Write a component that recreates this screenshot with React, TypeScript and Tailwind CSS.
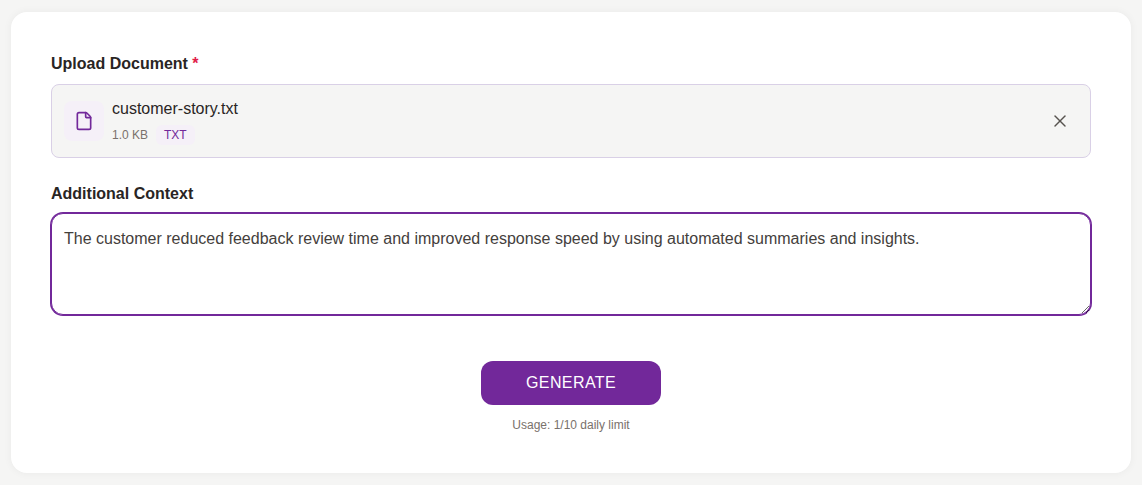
import { File, X } from "lucide-react";

export default function App() {
  return (
    <div className="min-h-[485px] bg-[#f5f5f4] px-[11px] pt-[12px] pb-[12px] font-['Liberation_Sans',Arial,sans-serif]">
      <div className="h-[461px] rounded-2xl bg-white px-10 pt-[41px] shadow-[0_0_8px_rgba(0,0,0,0.05)]">
        <label className="block h-[22px] text-base leading-[22px] font-bold text-[#292524]">
          Upload Document <span className="text-[#e11d48]">*</span>
        </label>

        <div className="mt-[9px] flex h-[74px] items-center justify-between rounded-lg border border-[#d9d0e6] bg-[#f5f5f4] pr-[20px] pl-3">
          <div className="flex items-center gap-2">
            <div className="flex h-10 w-10 items-center justify-center rounded-lg bg-[#f5f0f8]">
              <File size={20} strokeWidth={2} className="text-[#72289a]" />
            </div>
            <div>
              <div className="text-base leading-[22px] text-[#292524]">customer-story.txt</div>
              <div className="mt-[5px] flex items-center gap-2">
                <span className="text-xs text-[#79716b]">1.0 KB</span>
                <span className="rounded-md bg-[#f5f0f8] px-2 py-[2px] text-xs text-[#72289a]">TXT</span>
              </div>
            </div>
          </div>
          <X size={20} strokeWidth={1.75} className="text-[#57534e]" />
        </div>

        <label className="mt-[25px] block h-[22px] text-base leading-[22px] font-bold text-[#292524]">
          Additional Context
        </label>

        <textarea
          className="mt-[8px] block h-[102px] w-full rounded-xl border border-[#72289a] bg-white px-[12px] pt-[14px] pb-[12px] text-base leading-[22px] text-[#44403c] ring-1 ring-[#72289a] outline-none"
          defaultValue="The customer reduced feedback review time and improved response speed by using automated summaries and insights."
        />

        <div className="mt-[46px] flex flex-col items-center">
          <button className="h-[44px] w-[180px] rounded-xl bg-[#72289a] text-base tracking-[0.4px] text-white">
            GENERATE
          </button>
          <p className="mt-[12px] text-xs text-[#79716b]">Usage: 1/10 daily limit</p>
        </div>
      </div>
    </div>
  );
}
